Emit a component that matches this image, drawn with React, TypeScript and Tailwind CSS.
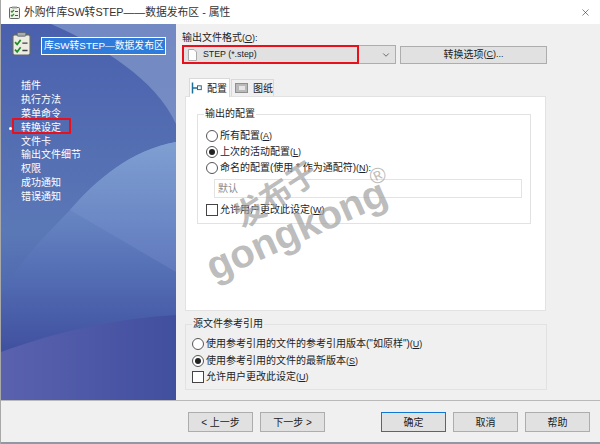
import { ReactNode } from 'react'
import { X, ChevronDown } from 'lucide-react'

const NAV_ITEMS = ['插件', '执行方法', '菜单命令', '转换设定', '文件卡', '输出文件细节', '权限', '成功通知', '错误通知']

function Hotkey({ k, suffix = '' }: { k: string; suffix?: string }) {
  return (
    <span className="text-[9px]">
      (<u>{k}</u>){suffix}
    </span>
  )
}

function Radio({ checked, label, hotkey, suffix }: { checked?: boolean; label: string; hotkey: string; suffix?: string }) {
  return (
    <div className="flex items-center h-[16px] gap-[2px]">
      <span className="w-[12px] h-[12px] rounded-full border border-[#555] bg-white flex items-center justify-center shrink-0">
        {checked && <span className="w-[6px] h-[6px] rounded-full bg-[#222]" />}
      </span>
      <span className="whitespace-nowrap">
        {label}
        <Hotkey k={hotkey} suffix={suffix} />
      </span>
    </div>
  )
}

function Check({ label, hotkey }: { label: string; hotkey: string }) {
  return (
    <div className="flex items-center h-[16px] gap-[2px]">
      <span className="w-[12px] h-[12px] border border-[#444] bg-white shrink-0" />
      <span className="whitespace-nowrap">
        {label}
        <Hotkey k={hotkey} />
      </span>
    </div>
  )
}

function Btn({ children, primary, className = '' }: { children: ReactNode; primary?: boolean; className?: string }) {
  return (
    <div
      className={`w-[65px] h-[20px] flex items-center justify-center bg-[#e1e1e1] border whitespace-nowrap ${
        primary ? 'border-[#0f78d4]' : 'border-[#adadad]'
      } ${className}`}
    >
      {children}
    </div>
  )
}

function Legend({ children }: { children: ReactNode }) {
  return <span className="absolute left-[5px] -top-[8px] px-[1px] leading-[14px]">{children}</span>
}

export default function App() {
  return (
    <div
      className="relative w-[600px] h-[444px] overflow-hidden bg-white flex flex-col text-[10px] text-[#222] border-l border-[#a8a8a8]"
      style={{ fontFamily: '"Liberation Sans", "Noto Sans CJK SC", sans-serif' }}
    >
      {/* Title bar */}
      <div className="h-[24px] flex items-center pl-[8px] pr-[8px] shrink-0">
        <svg width="11" height="13" viewBox="0 0 11 13" className="mr-[4px]">
          <rect x="0.5" y="1.5" width="10" height="11" rx="1" fill="#f2f2ea" stroke="#666" />
          <rect x="3" y="0.5" width="5" height="2" fill="#999" />
          <path d="M2 5l1 1 2-2M2 9l1 1 2-2" stroke="#2f8f2f" strokeWidth="1.3" fill="none" />
          <path d="M6 5.5h3M6 9.5h3" stroke="#555" />
        </svg>
        <span className="text-[10.8px] text-[#333] whitespace-nowrap">外购件库SW转STEP——数据发布区 - 属性</span>
        <X size={11} strokeWidth={1.2} className="ml-auto text-[#222] mr-[1px]" />
      </div>

      <div className="flex h-[376px] shrink-0">
        {/* Left panel */}
        <div className="relative w-[175px] shrink-0 bg-[#4e66b0] overflow-hidden">
          <svg className="absolute inset-0" width="175" height="376" viewBox="0 0 175 376">
            <defs>
              <linearGradient id="base" x1="0" y1="0" x2="0" y2="1">
                <stop offset="0" stopColor="#4a60ad" />
                <stop offset="0.55" stopColor="#5b78b6" />
                <stop offset="0.75" stopColor="#4c66ae" />
                <stop offset="1" stopColor="#43509f" />
              </linearGradient>
              <linearGradient id="lift" x1="0" y1="0" x2="0" y2="1">
                <stop offset="0" stopColor="#7f9fd2" />
                <stop offset="0.6" stopColor="#5570b5" />
                <stop offset="1" stopColor="#3f4f9f" />
              </linearGradient>
              <linearGradient id="wedge" x1="0" y1="0" x2="0" y2="1">
                <stop offset="0" stopColor="#7f9fd2" />
                <stop offset="1" stopColor="#6079bd" />
              </linearGradient>
              <linearGradient id="low" x1="0" y1="0" x2="1" y2="0">
                <stop offset="0" stopColor="#5a62ae" />
                <stop offset="1" stopColor="#414f9f" />
              </linearGradient>
            </defs>
            <rect width="175" height="376" fill="url(#base)" />
            <path d="M50 0C100 22 155 55 175 100V0Z" fill="#7d93c8" opacity="0.8" />
            <path d="M175 118C130 126 95 156 69 186C40 216 15 241 0 271V330H175Z" fill="url(#lift)" />
            <path d="M69 186L175 248V118C130 126 95 156 69 186Z" fill="url(#wedge)" />
            <path d="M0 328C60 306 120 294 175 291V376H0Z" fill="url(#low)" />
          </svg>
          <div className="relative flex items-start pt-[8px] pl-[11px]">
            <svg width="19" height="24" viewBox="0 0 22 26" preserveAspectRatio="none" className="shrink-0">
              <rect x="1" y="3" width="20" height="22" rx="2" fill="#ecece2" stroke="#5f6670" strokeWidth="1.5" />
              <rect x="6" y="0.5" width="10" height="4" rx="1" fill="#a9adb0" stroke="#5f6670" />
              <path d="M3.5 11l2.5 2.5 4-5M3.5 19l2.5 2.5 4-5" stroke="#1e8c2c" strokeWidth="2" fill="none" />
              <path d="M12 12h6M12 20h6" stroke="#3a3f45" strokeWidth="1.5" />
            </svg>
            <div className="ml-[10px] mt-[5px] w-[125px] h-[18px] bg-[#2f7bdc] border border-white text-white text-[9.8px] leading-[16px] pl-[2px] overflow-hidden whitespace-nowrap">
              库SW转STEP—数据发布区
            </div>
          </div>
          <ul className="relative mt-[23px] pl-[20px] text-white text-[10px]">
            {NAV_ITEMS.map((item) => (
              <li key={item} className="h-[13.9px] leading-[13.9px]">
                {item}
              </li>
            ))}
          </ul>
          <span className="absolute left-[8px] top-[103px] w-[3px] h-[3px] rounded-full bg-white" />
          <span className="absolute left-[11px] top-[94px] w-[59px] h-[16px] border-2 border-[#e8101a] rounded-[1px]" />
        </div>

        {/* Right panel */}
        <div className="flex-1 min-w-0 bg-[#f0f0f0] flex flex-col">
          <div className="pl-[6px] pr-[53px] pt-[7px]">
            <div className="leading-[14px]">
              输出文件格式
              <Hotkey k="O" suffix=":" />
            </div>
            <div className="flex items-center gap-[4px]">
              <div className="relative w-[214px] h-[19px] bg-[#e1e1e1] border border-[#adadad] flex items-center pl-[5px]">
                <svg width="9" height="12" viewBox="0 0 9 12" className="mr-[6px]">
                  <path d="M0.5 0.5h5.5l2.5 2.5v8.500h-8z" fill="#fdfdfd" stroke="#aaa" />
                </svg>
                <span className="text-[8.8px]">STEP (*.step)</span>
                <ChevronDown size={10} className="ml-auto mr-[4px] text-[#555]" />
                <span className="absolute -left-px -top-px w-[177px] h-[19px] border-2 border-[#e8101a]" />
              </div>
              <div className="flex-1 h-[18px] bg-[#e1e1e1] border border-[#adadad] flex items-center justify-center">
                转换选项
                <Hotkey k="C" suffix="..." />
              </div>
            </div>
          </div>

          {/* Tabs */}
          <div className="pl-[9px] pr-[54px] mt-[14px]">
            <div className="flex items-end h-[18px] pl-[4px] gap-[1px] relative z-10">
              <div className="w-[41px] h-[19px] -mb-px bg-white border border-[#d9d9d9] border-b-0 flex items-center pl-[1px] gap-[5px] whitespace-nowrap">
                <svg width="11" height="12" viewBox="0 0 11 12" className="shrink-0">
                  <path d="M1.500 0.500v11M1.500 6h6" stroke="#1f6f9c" strokeWidth="1.500" />
                  <rect x="6.500" y="3.800" width="3.800" height="3.800" fill="#fff" stroke="#1f6f9c" />
                </svg>
                配置
              </div>
              <div className="w-[43px] h-[17px] bg-[#f0f0f0] border border-[#d9d9d9] border-b-0 flex items-center pl-[3px] gap-[5px] whitespace-nowrap">
                <span className="w-[13px] h-[10px] bg-[#b9b9b9] border border-[#8f8f8f] flex items-center justify-center shrink-0">
                  <span className="w-[6px] h-[4px] bg-[#e6e6e6]" />
                </span>
                图纸
              </div>
            </div>
            <div className="h-[215px] bg-white border border-[#e2e2e2] pt-[17px] pl-[11px] pr-[14px]">
              <div className="relative h-[110px] border border-[#e2e2e2] pt-[13px] pl-[8px]">
                <Legend>
                  <span className="bg-white px-[1px]">输出的配置</span>
                </Legend>
                <Radio label="所有配置" hotkey="A" />
                <Radio checked label="上次的活动配置" hotkey="L" />
                <Radio label="命名的配置(使用 * 作为通配符)" hotkey="N" suffix=":" />
                <div className="ml-[8px] mt-[3px] w-[308px] h-[19px] border border-[#e3e3e3] pl-[3px] leading-[17px] text-[#8a8a8a]">
                  默认
                </div>
                <div className="mt-[4px]">
                  <Check label="允许用户更改此设定" hotkey="W" />
                </div>
              </div>
            </div>
          </div>

          {/* Source references */}
          <div className="ml-[9px] mr-[53px] mt-[13px] relative h-[66px] border border-[#e2e2e2] pt-[11px] pl-[6px]">
            <Legend>
              <span className="bg-[#f0f0f0] px-[1px]">源文件参考引用</span>
            </Legend>
            <Radio label='使用参考引用的文件的参考引用版本("如原样")' hotkey="U" />
            <div className="mt-[1px]">
              <Radio checked label="使用参考引用的文件的最新版本" hotkey="S" />
            </div>
            <Check label="允许用户更改此设定" hotkey="U" />
          </div>
        </div>
      </div>

      {/* Footer */}
      <div className="h-[42px] shrink-0 bg-[#f0f0f0] border-t border-[#b9b9b9] flex items-start pt-[11px] pl-[187px] pr-[10px] gap-[7px]">
        <Btn>&lt; 上一步</Btn>
        <Btn>下一步 &gt;</Btn>
        <Btn primary className="ml-auto">确定</Btn>
        <Btn>取消</Btn>
        <Btn>帮助</Btn>
      </div>
      <div className="flex-1 bg-[#8f98a3]" />

      {/* Watermark */}
      <div className="absolute inset-0 pointer-events-none text-[#a0a0a0]/70 font-bold">
        <span className="absolute left-[275px] top-[195px] -translate-x-1/2 -translate-y-1/2 text-[31px] leading-none -rotate-[33deg] whitespace-nowrap">发布于</span>
        <span className="absolute left-[295px] top-[229px] -translate-x-1/2 -translate-y-1/2 text-[40px] leading-none -rotate-[24deg] whitespace-nowrap">gongkong</span>
        <span className="absolute left-[377px] top-[176px] -translate-x-1/2 -translate-y-1/2 text-[22px] leading-none font-normal -rotate-[25deg]">®</span>
      </div>
    </div>
  )
}
